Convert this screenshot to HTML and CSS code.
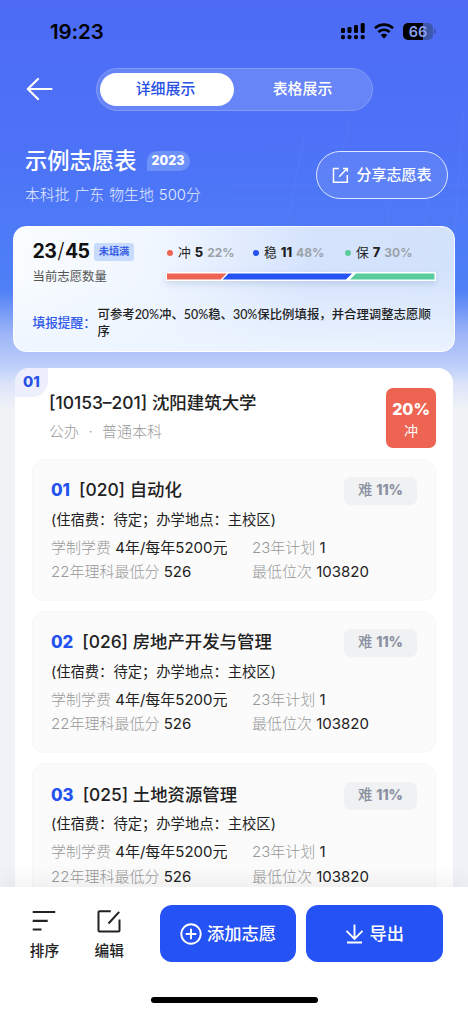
FILE: index.html
```html
<!DOCTYPE html>
<html lang="zh-CN">
<head>
<meta charset="utf-8">
<title>示例志愿表</title>
<link rel="stylesheet" href="styles.css">
</head>
<body>
<div class="screen">
  <svg class="grid-art" width="248" height="150" viewBox="0 0 248 150" fill="none" stroke="#fff" stroke-opacity=".045">
    <path d="M40 56h208M30 80h218M10 96h238M10 110h238M0 129h248M84 48L68 129M130 30l-14 60M170 110l-6 40M208 110l-4 40M244 20l-10 130"/>
  </svg>
  <header class="status">
    <span class="clock">19:23</span>
    <svg class="signal" width="24" height="17" viewBox="0 0 24 17"><rect y="5" width="4" height="5" rx="1.2"/><rect x="6.5" y="4" width="4" height="6" rx="1.2"/><rect x="13" y="2" width="4" height="8" rx="1.2"/><rect x="19.7" y="0" width="4" height="10" rx="1.2"/><rect y="12" width="4" height="4.2" rx="1.6"/><rect x="6.5" y="12" width="4" height="4.2" rx="1.6"/><rect x="13" y="12" width="4" height="4.2" rx="1.6"/><rect x="19.7" y="12" width="4" height="4.2" rx="1.6"/></svg>
    <svg class="wifi" width="20" height="16" viewBox="0 0 20 16" fill="none" stroke="#000" stroke-width="2.7"><path d="M1 5.2a13 13 0 0 1 18 0M4.3 9a8.3 8.3 0 0 1 11.4 0"/><path d="M10 15.5L6.7 12.1a4.7 4.7 0 0 1 6.6 0z" fill="#000" stroke="none"/></svg>
    <span class="battery"><b>66</b></span><i class="battery-tip"></i>
  </header>
  <nav class="topbar">
    <svg width="27" height="23" viewBox="0 0 27 23" fill="none" stroke="#fff" stroke-width="2.2" stroke-linecap="round" stroke-linejoin="round"><path d="M12 1L1.800 11l10.200 10M1.800 11h23.700"/></svg>
    <div class="tabs"><span class="tab active">详细展示</span><span class="tab">表格展示</span></div>
  </nav>
  <section class="heading">
    <div class="heading-text">
      <div class="title-row"><h1>示例志愿表</h1><span class="year">2023</span></div>
      <p class="subtitle">本科批 广东 物生地 500分</p>
    </div>
    <div class="share">
      <svg width="17" height="17" viewBox="0 0 17 17" fill="none" stroke="#fff" stroke-width="1.5"><path d="M6.8 1.5H1.5v13.8h13.8V8M7.2 9.8L14.8 1.7M11 1.5h4.3v3.3"/></svg>
      <span>分享志愿表</span>
    </div>
  </section>
  <section class="summary">
    <div class="summary-top">
      <div class="count">
        <div class="count-row"><span class="count-num">23<em>/</em>45</span><span class="tag">未填满</span></div>
        <p class="count-label">当前志愿数量</p>
      </div>
      <div class="ratio">
        <div class="legend">
          <span class="leg red"><i></i>冲 <b>5</b> <u>22%</u></span>
          <span class="leg blue"><i></i>稳 <b>11</b> <u>48%</u></span>
          <span class="leg green"><i></i>保 <b>7</b> <u>30%</u></span>
        </div>
        <svg class="bar" width="270" height="9" viewBox="0 0 270 9"><path fill="#fff" d="M0 0h270v9H0z"/><path fill="#ed6453" d="M1 1.5h59.5L54.700 7.500H1z"/><path fill="#2452f4" d="M62.500 1.500H186L180 7.500H56.700z"/><path fill="#5acb9c" d="M190 1.500h78.500v6H184z"/></svg>
      </div>
    </div>
    <div class="tip"><span class="tip-label">填报提醒：</span><p class="tip-text">可参考20%冲、50%稳、30%保比例填报，并合理调整志愿顺序</p></div>
  </section>
  <main class="school">
    <span class="order">01</span>
    <div class="school-head">
      <div>
        <h2>[10153–201] 沈阳建筑大学</h2>
        <p class="kind">公办 <span>·</span> 普通本科</p>
      </div>
      <div class="chance"><b>20%</b><span>冲</span></div>
    </div>
    <article class="major">
      <div class="major-head"><b class="no">01</b><h3>[020] 自动化</h3><span class="hard">难 <b>11%</b></span></div>
      <p class="note">(住宿费：待定；办学地点：主校区)</p>
      <div class="facts"><span><i>学制学费</i> 4年/每年5200元</span><span><i>23年计划</i> 1</span><span><i>22年理科最低分</i> 526</span><span><i>最低位次</i> 103820</span></div>
    </article>
    <article class="major">
      <div class="major-head"><b class="no">02</b><h3>[026] 房地产开发与管理</h3><span class="hard">难 <b>11%</b></span></div>
      <p class="note">(住宿费：待定；办学地点：主校区)</p>
      <div class="facts"><span><i>学制学费</i> 4年/每年5200元</span><span><i>23年计划</i> 1</span><span><i>22年理科最低分</i> 526</span><span><i>最低位次</i> 103820</span></div>
    </article>
    <article class="major">
      <div class="major-head"><b class="no">03</b><h3>[025] 土地资源管理</h3><span class="hard">难 <b>11%</b></span></div>
      <p class="note">(住宿费：待定；办学地点：主校区)</p>
      <div class="facts"><span><i>学制学费</i> 4年/每年5200元</span><span><i>23年计划</i> 1</span><span><i>22年理科最低分</i> 526</span><span><i>最低位次</i> 103820</span></div>
    </article>
  </main>
  <footer class="actions">
    <div class="action-row">
      <div class="tool"><svg width="24" height="23" viewBox="0 0 24 23" fill="none" stroke="#222" stroke-width="2.2"><path d="M.7 2h22.500M.7 10.800h15M.7 19.500h8.800"/></svg><span>排序</span></div>
      <div class="tool"><svg width="24" height="23" viewBox="0 0 24 23" fill="none" stroke="#222" stroke-width="2"><path d="M13.800 1.200H2.500a1 1 0 0 0-1 1V20.500a1 1 0 0 0 1 1H21.500a1 1 0 0 0 1-1V9.500M11.500 13.500L22.200 1.800"/></svg><span>编辑</span></div>
      <div class="btn"><svg width="22" height="22" viewBox="0 0 22 22" fill="none" stroke="#fff" stroke-width="1.9"><circle cx="11" cy="11" r="9.700"/><path d="M5.700 11h10.600M11 5.700v10.600"/></svg><span>添加志愿</span></div>
      <div class="btn export"><svg width="19" height="20" viewBox="0 0 19 20" fill="none" stroke="#fff" stroke-width="1.900"><path d="M9.500 .5v14M1.500 6.800l8 8 8-8M2 18.500h15"/></svg><span>导出</span></div>
    </div>
    <div class="home"></div>
  </footer>
</div>
</body>
</html>
```
FILE: styles.css
```css
* { box-sizing: border-box; margin: 0; padding: 0; }
body { background: #f0f2f6; font-family: Inter, "Noto Sans CJK SC", sans-serif; color: #222; }
i, em, u { font-style: normal; text-decoration: none; }
.screen {
  position: relative; width: 468px; height: 1013px; overflow: hidden;
  display: flex; flex-direction: column; white-space: nowrap;
  background: linear-gradient(180deg, #4d6bf5 0, #4d72f7 150px, #4d7cf7 250px, #4f80f6 290px, #9eb6f7 335px, #bccdfa 365px, #dde5f9 385px, #f0f2f6 410px, #eff2f6 100%);
}
.grid-art { position: absolute; left: 220px; top: 90px; }
.status { height: 62px; padding-left: 50px; display: flex; align-items: center; flex: none; }
.clock { width: 291px; font-size: 20.500px; font-weight: 600; color: #000; letter-spacing: -.1px; }
.signal { margin-right: 9px; }
.battery { margin-left: 9px; width: 30px; height: 17px; border-radius: 5px; background: linear-gradient(90deg, #000 20px, #3c57ab 20px); color: #8ba1ef; font-size: 14.5px; line-height: 17px; text-align: center; }
.battery b { font-weight: 600; }
.battery-tip { width: 2px; height: 5px; margin-left: 1px; background: #3c57ab; border-radius: 0 2px 2px 0; }
.topbar { display: flex; align-items: center; height: 54px; padding-left: 26px; flex: none; }
.tabs { display: flex; margin-left: 43px; width: 277px; height: 43px; padding: 4px 3px; border: 1px solid #829bf9; border-radius: 22px; background: #6885f7; }
.tab { width: 134px; height: 33px; line-height: 33px; padding-left: 3px; text-align: center; font-size: 14.900px; font-weight: 500; color: #fff; border-radius: 17px; }
.active { padding: 0 3px 0 0; background: #fff; color: #2851e4; }
.heading { display: flex; justify-content: space-between; padding: 28px 20px 0 25px; height: 110px; flex: none; color: #fff; }
.title-row { display: flex; align-items: center; height: 33px; }
h1 { font-size: 22.300px; font-weight: 500; line-height: 30px; }
.year { margin-left: 10px; width: 43px; height: 20px; border-radius: 10px 10px 10px 0; background: #6c92fa; font-size: 12.500px; font-weight: 800; line-height: 19px; text-align: center; }
.subtitle { height: 36px; line-height: 36px; font-size: 14.800px; font-weight: 300; color: #e5ecff; word-spacing: 1px; }
.share { display: flex; align-items: center; justify-content: center; gap: 7px; margin-top: 7px; width: 132px; height: 48px; border: 1.300px solid #dce6ff; border-radius: 24px; background: rgba(255,255,255,.09); font-size: 15px; font-weight: 500; }
.share span { margin-top: -3px; }
.summary { flex: none; margin: 0 13px 0 13px; width: 442px; height: 125.500px; border: 1.500px solid #fff; border-radius: 13px; padding: 12px 0 0 18px; background: linear-gradient(180deg, rgba(239,246,255,0) 35%, rgba(237,245,255,.9) 100%), linear-gradient(100deg, #fafdff 0, #f0f6ff 32%, #d5e3fc 65%, #d3e2fc 100%); }
.summary-top { display: flex; height: 56px; }
.count { width: 135px; padding-left: .5px; }
.count-row { display: flex; align-items: center; height: 26px; }
.count-num { width: 61.500px; font-size: 19.500px; font-weight: 700; color: #111; letter-spacing: -.6px; line-height: 24px; margin-top: -2px; }
.count-num em { font-weight: 300; font-size: 21px; margin: 0 1px; }
.tag { width: 40px; height: 18px; line-height: 16px; text-align: center; font-size: 10.200px; font-weight: 700; color: #3a60e8; background: #c8dbfc; border-radius: 3px; }
.count-label { font-size: 12.400px; line-height: 24px; color: #555; }
.legend { display: flex; height: 27px; align-items: center; font-size: 12.800px; padding-top: 1px; }
.leg { display: flex; align-items: center; gap: 4px; line-height: 20px; }
.leg i { width: 6px; height: 6px; border-radius: 50%; margin-right: 1px; }
.leg b { font-weight: 800; } .leg u { color: #9ba2a9; font-weight: 700; font-size: 12px; }
.red { width: 86px; } .blue { width: 92px; }
.red i { background: #ed6453; } .blue i { background: #2452f4; } .green i { background: #5acb9c; }
.bar { display: block; margin-top: 6px; margin-left: -1px; filter: drop-shadow(0 3px 3px rgba(80,110,160,.2)); }
.tip { display: flex; height: 40px; align-items: center; margin-top: 8px; font-size: 12.400px; font-weight: 500; }
.tip-label { width: 65.500px; color: #3159eb; font-size: 12.700px; padding-left: .5px; margin-top: -3px; }
.tip-text { width: 337px; white-space: normal; word-break: break-all; line-height: 17px; font-family: Lato, "Noto Sans CJK SC", sans-serif; }
.school { position: relative; flex: none; margin: 16.500px 15px 0; height: 640px; padding: 20px 17px; background: #fff; border-radius: 15px; }
.order { position: absolute; left: 0; top: 0; width: 33px; height: 29px; line-height: 29px; text-align: center; font-size: 14.800px; font-weight: 800; color: #2851e8; background: #edf0fc; border-radius: 14px 0 16px 0; }
.school-head { display: flex; justify-content: space-between; padding-left: 17px; height: 70.500px; }
h2 { font-size: 17.450px; font-weight: 500; line-height: 30px; }
.kind { color: #999; font-size: 15px; font-weight: 300; line-height: 28px; }
.kind span { margin: 0 5.200px; }
.chance { width: 50px; height: 60px; border-radius: 7px; background: #ed6453; color: #fff; text-align: center; display: flex; flex-direction: column; padding-top: 11px; font-size: 14px; line-height: 22px; }
.chance b { font-size: 16px; font-weight: 800; line-height: 21px; }
.major { height: 142px; margin-bottom: 10.400px; padding: 17px 18px 0; border: 1px solid #f7f7f7; border-radius: 13px; background: #fbfbfb; }
.major-head { display: flex; align-items: center; height: 29px; }
.no { margin-right: 9px; color: #2452ef; font-size: 16.800px; font-weight: 800; line-height: 26px; margin-top: -2px; }
h3 { font-size: 17.400px; font-weight: 500; line-height: 26px; margin-top: -2px; }
.hard { margin-left: auto; width: 73px; height: 28px; border-radius: 7px; background: #eff1f2; color: #8b90a1; font-size: 14.400px; font-weight: 500; text-align: center; line-height: 26px; }
.hard b { font-weight: 800; font-size: 14px; }
.note { font-size: 14.300px; line-height: 28px; }
.facts { display: grid; grid-template-columns: 201px 1fr; grid-auto-rows: 24.500px; margin-top: 2px; line-height: 24px; font-size: 15px; }
.facts i { color: #999; font-weight: 300; }
.actions { position: absolute; left: 0; right: 0; bottom: 0; height: 126px; background: #fff; box-shadow: 0 -8px 18px rgba(0,0,0,.05); }
.action-row { display: flex; padding: 18px 25px 0 12px; height: 94px; }
.tool { width: 65px; padding-top: 5px; display: flex; flex-direction: column; align-items: center; gap: 6px; font-size: 14.700px; font-weight: 500; line-height: 24px; }
.btn { margin-left: 18px; width: 137px; height: 57px; display: flex; align-items: center; justify-content: center; gap: 5px; border-radius: 12px; background: #2452f4; color: #fff; font-size: 17.300px; font-weight: 500; }
.btn span { margin-top: -3px; }
.export { margin-left: 10px; }
.home { width: 167px; height: 6px; margin: 16px auto 0; border-radius: 3px; background: #000; }
```
